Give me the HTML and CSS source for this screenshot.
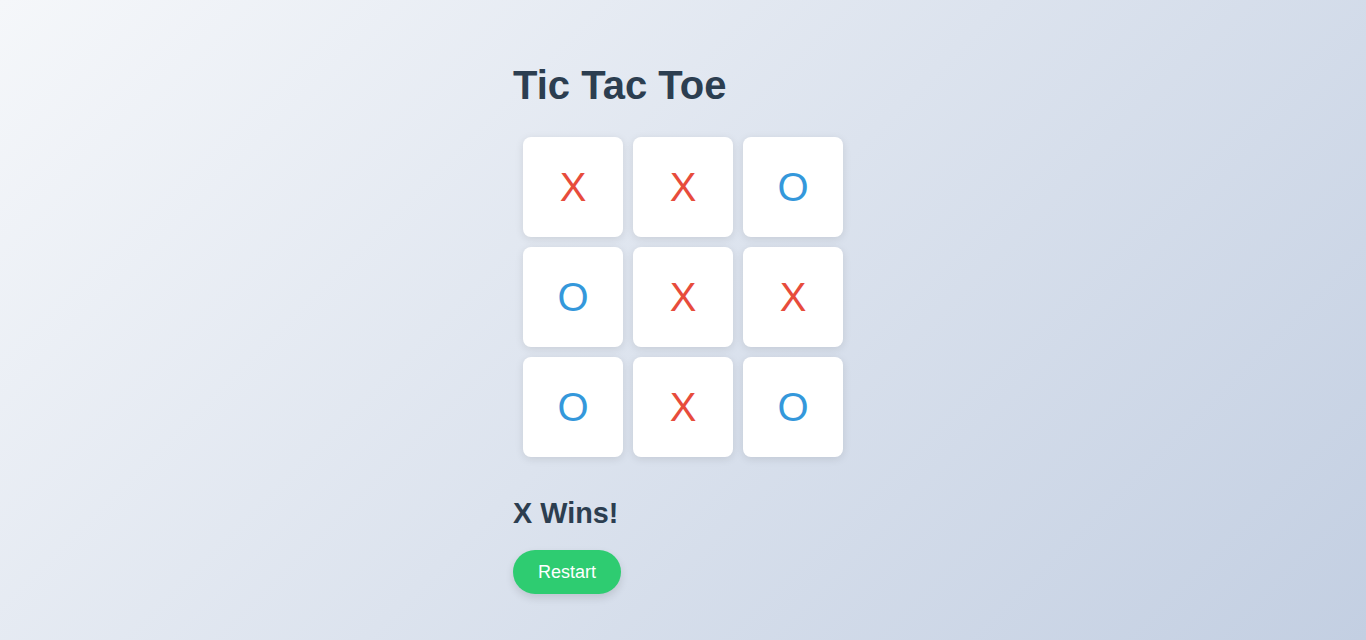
FILE: index.html
```html
<!DOCTYPE html>
<html lang="en">
<head>
<meta charset="UTF-8">
<title>Tic Tac Toe</title>
<link rel="stylesheet" href="styles.css">
</head>
<body>
  <main class="game">
    <h1 class="title">Tic Tac Toe</h1>
    <div class="board">
      <div class="cell x">X</div>
      <div class="cell x">X</div>
      <div class="cell o">O</div>
      <div class="cell o">O</div>
      <div class="cell x">X</div>
      <div class="cell x">X</div>
      <div class="cell o">O</div>
      <div class="cell x">X</div>
      <div class="cell o">O</div>
    </div>
    <div class="status">X Wins!</div>
    <div class="actions">
      <button class="restart">Restart</button>
    </div>
  </main>
</body>
</html>
```

FILE: styles.css
```css
html, body {
  margin: 0;
  padding: 0;
}
body {
  min-height: 100vh;
  background: linear-gradient(135deg, #f5f7fa 0%, #c3cfe2 100%);
  font-family: "Liberation Sans", Arial, sans-serif;
  color: #2c3e50;
}
.game {
  width: 340px;
  margin: 0 auto;
  padding-top: 62px;
  display: flex;
  flex-direction: column;
}
.title {
  margin: 0;
  font-size: 40px;
  font-weight: bold;
  color: #2c3e50;
  line-height: 46px;
}
.board {
  margin: 29px auto 0;
  display: grid;
  grid-template-columns: repeat(3, 100px);
  grid-template-rows: repeat(3, 100px);
  gap: 10px;
}
.cell {
  background: #fff;
  border-radius: 8px;
  box-shadow: 0 2px 8px rgba(0, 0, 0, 0.1);
  display: flex;
  align-items: center;
  justify-content: center;
  font-size: 40px;
}
.cell.x { color: #e74c3c; }
.cell.o { color: #3498db; }
.status {
  margin-top: 40px;
  font-size: 28.8px;
  font-weight: bold;
  line-height: 32px;
  color: #2c3e50;
}
.actions {
  margin-top: 21px;
  display: flex;
}
.restart {
  font-family: "Liberation Sans", Arial, sans-serif;
  font-size: 18px;
  line-height: 20px;
  padding: 12px 25px;
  border: none;
  border-radius: 25px;
  background: #2ecc71;
  color: #fff;
  box-shadow: 0 4px 8px rgba(0, 0, 0, 0.12);
  cursor: pointer;
}
```
